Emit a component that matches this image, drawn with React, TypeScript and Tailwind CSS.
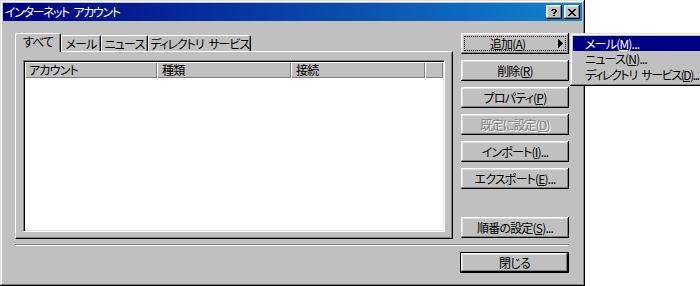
import React from "react";

const raised =
  "shadow-[inset_-1px_-1px_#000,inset_1px_1px_#fff,inset_-2px_-2px_#808080,inset_2px_2px_#dfdfdf]";
const windowBevel =
  "shadow-[inset_-1px_-1px_#000,inset_1px_1px_#dfdfdf,inset_-2px_-2px_#808080,inset_2px_2px_#fff]";

function U({ c }: { c: string }) {
  return <span className="underline underline-offset-[1px]">{c}</span>;
}

function Pixels({ rows, w, h }: { rows: string[]; w: number; h: number }) {
  const rects: React.ReactElement[] = [];
  rows.forEach((r, y) =>
    r.split("").forEach((ch, x) => {
      if (ch === "X") rects.push(<rect key={`${x}-${y}`} x={x} y={y} width={1} height={1} />);
    })
  );
  return (
    <svg width={w} height={h} viewBox={`0 0 ${w} ${h}`} shapeRendering="crispEdges" fill="#000">
      {rects}
    </svg>
  );
}

function Btn({
  children,
  disabled,
  className = "",
}: {
  children: React.ReactNode;
  disabled?: boolean;
  className?: string;
}) {
  return (
    <div
      className={`h-[21px] w-[108px] bg-[#c0c0c0] ${raised} flex items-center justify-center text-[12px] leading-none whitespace-nowrap ${
        disabled ? "text-[#808080] [text-shadow:1px_1px_0_#fff]" : "text-black"
      } ${className}`}
    >
      {children}
    </div>
  );
}

function Tab({
  children,
  w,
  selected,
  className = "",
}: {
  children: React.ReactNode;
  w: number;
  selected?: boolean;
  className?: string;
}) {
  return (
    <div
      style={{ width: w }}
      className={`${
        selected ? "h-[19px] -mb-[1px] relative z-10 pb-[2px]" : "h-[16px]"
      } shrink-0 bg-[#c0c0c0] border-t border-l border-white border-r border-r-black rounded-tl-[2px] rounded-tr-[2px] shadow-[inset_-1px_0_#808080] flex items-center justify-center text-[12px] leading-none text-black whitespace-nowrap ${className}`}
    >
      {children}
    </div>
  );
}

export default function App() {
  return (
    <div className="relative w-[700px] h-[286px] overflow-hidden bg-white whitespace-nowrap tracking-[-0.8px] font-['Noto_Sans_CJK_JP','Noto_Sans',sans-serif] [font-feature-settings:'palt']">
      <div className={`w-[585px] h-[286px] bg-[#c0c0c0] ${windowBevel} p-[3px] flex flex-col`}>
        {/* Title bar */}
        <div className="h-[18px] flex items-center bg-[linear-gradient(to_right,#000080,#1084d0)]">
          <span className="pl-[2px] text-white text-[12px] leading-none tracking-[-1.4px]">
            インターネット{"\u2002"}アカウント
          </span>
          <div className="ml-auto mr-[2px] flex gap-[2px]">
            <div className={`w-[16px] h-[14px] bg-[#c0c0c0] ${raised} flex items-center justify-center`}>
              <Pixels
                w={6}
                h={7}
                rows={[".XXXX.", "XX..XX", "....XX", "...XX.", "..XX..", "......", "..XX.."]}
              />
            </div>
            <div className={`w-[16px] h-[14px] bg-[#c0c0c0] ${raised} flex items-center justify-center`}>
              <Pixels
                w={8}
                h={7}
                rows={["XX....XX", ".XX..XX.", "..XXXX..", "...XX...", "..XXXX..", ".XX..XX.", "XX....XX"]}
              />
            </div>
          </div>
        </div>

        {/* Body */}
        <div className="px-[12px] pt-[12px] flex flex-col">
          <div className="flex gap-[8px] h-[206px]">
            {/* Left: tabs + panel */}
            <div className="w-[438px] flex flex-col">
              <div className="h-[18px] flex items-end">
                <Tab w={46} selected>
                  すべて
                </Tab>
                <Tab w={40}>メール</Tab>
                <Tab w={47}>ニュース</Tab>
                <Tab w={103} className="tracking-[-1.1px]">
                  ディレクトリ{"\u2002"}サービス
                </Tab>
              </div>
              <div className="h-[188px] border-t border-l border-white border-r border-b border-r-black border-b-black shadow-[inset_-1px_-1px_#808080] pt-[8px] pl-[7px] pr-[7px] pb-[6px] flex">
                <div className="flex-1 border border-t-[#808080] border-l-[#808080] border-r-white border-b-white shadow-[inset_1px_1px_#000,inset_-1px_-1px_#dfdfdf] p-[1px] flex flex-col">
                  <div className="h-[16px] flex bg-[#c0c0c0] text-[12px] leading-none text-black">
                    <div className="w-[132px] shadow-[inset_1px_1px_#fff,inset_-1px_-1px_#808080] flex items-center pl-[4px]">
                      アカウント
                    </div>
                    <div className="w-[134px] shadow-[inset_1px_1px_#fff,inset_-1px_-1px_#808080] flex items-center pl-[5px]">
                      種類
                    </div>
                    <div className="w-[134px] shadow-[inset_1px_1px_#fff,inset_-1px_-1px_#808080] flex items-center pl-[5px]">
                      接続
                    </div>
                    <div className="flex-1 shadow-[inset_1px_1px_#fff,inset_-1px_-1px_#808080]" />
                  </div>
                  <div className="flex-1 bg-white" />
                </div>
              </div>
            </div>

            {/* Right: buttons */}
            <div className="w-[108px] flex flex-col gap-[6px]">
              <div className={`h-[21px] w-[108px] bg-[#c0c0c0] ${raised} p-[3px] flex`}>
                <div className="flex-1 border border-dotted border-black flex items-center text-[12px] leading-none text-black">
                  <span className="flex-1 text-center pr-[8px]">
                    追加(<U c="A" />)
                  </span>
                  <svg width="5" height="9" viewBox="0 0 5 9" shapeRendering="crispEdges" className="mr-[2px]">
                    <polygon points="0,0 5,4.5 0,9" fill="#000" />
                  </svg>
                </div>
              </div>
              <Btn>
                削除(<U c="R" />)
              </Btn>
              <Btn>
                プロパティ(<U c="P" />)
              </Btn>
              <Btn disabled>
                既定に設定(<U c="D" />)
              </Btn>
              <Btn>
                インポート(<U c="I" />)...
              </Btn>
              <Btn>
                エクスポート(<U c="E" />)...
              </Btn>
              <Btn className="mt-auto mb-[1px]">
                順番の設定(<U c="S" />)...
              </Btn>
            </div>
          </div>

          {/* Separator */}
          <div className="mt-[5px] w-[554px] h-[2px] border-t border-t-[#808080] border-b border-b-white" />

          {/* Close button */}
          <div className="mt-[6px] w-[554px] flex justify-end">
            <div className="w-[109px] h-[21px] border border-black flex">
              <div className={`flex-1 bg-[#c0c0c0] ${raised} flex items-center justify-center text-[12px] leading-none text-black`}>
                閉じる
              </div>
            </div>
          </div>
        </div>
      </div>

      {/* Submenu overlay */}
      <div className={`absolute left-[570px] top-[33px] w-[136px] h-[53px] bg-[#c0c0c0] ${windowBevel} p-[3px] flex flex-col text-[12px] leading-none`}>
        <div className="h-[15px] flex items-center pl-[12px] bg-[#000080] text-white">
          メール(<U c="M" />)...
        </div>
        <div className="h-[16px] flex items-center pl-[12px] text-black">
          ニュース(<U c="N" />)...
        </div>
        <div className="h-[16px] flex items-center pl-[12px] text-black tracking-[-1.4px]">
          ディレクトリ{"\u2002"}サービス(<U c="D" />)...
        </div>
      </div>
    </div>
  );
}
